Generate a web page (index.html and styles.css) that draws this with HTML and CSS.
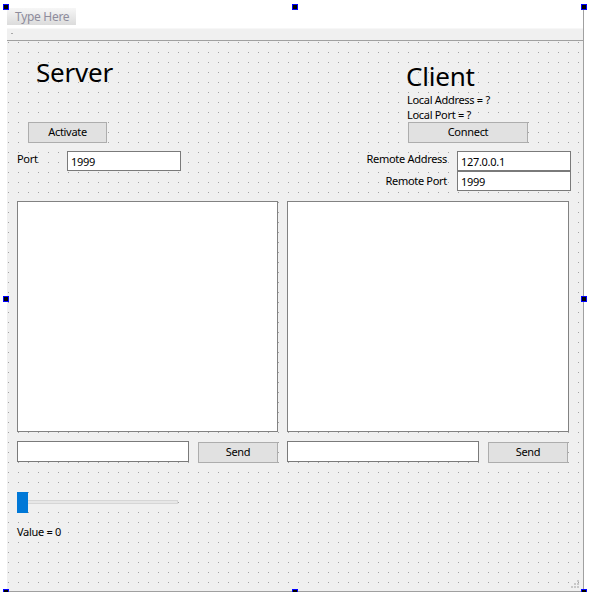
FILE: index.html
```html
<!DOCTYPE html>
<html>
<head>
<meta charset="utf-8">
<link rel="stylesheet" href="styles.css">
</head>
<body>
<div class="form">
  <div class="menubar"><div class="typehere">Type Here</div></div>
  <div class="toolbar"><span class="tb-mark"></span></div>
  <div class="central">
    <div class="top">
      <div class="server-col">
        <div class="title server-title">Server</div>
        <div class="btn activate">Activate</div>
        <div class="port-row">
          <div class="lbl port-lbl">Port</div>
          <div class="edit port-edit">1999</div>
        </div>
      </div>
      <div class="client-col">
        <div class="title client-title">Client</div>
        <div class="info">Local Address = ?</div>
        <div class="info">Local Port = ?</div>
        <div class="btn connect">Connect</div>
        <div class="remote-row first">
          <div class="lbl rlbl">Remote Address</div>
          <div class="edit redit">127.0.0.1</div>
        </div>
        <div class="remote-row">
          <div class="lbl rlbl rport">Remote Port</div>
          <div class="edit redit">1999</div>
        </div>
      </div>
    </div>
    <div class="editors">
      <div class="textedit left"></div>
      <div class="textedit right"></div>
    </div>
    <div class="send-row">
      <div class="edit line left-line"></div>
      <div class="btn send">Send</div>
      <div class="edit line right-line"></div>
      <div class="btn send">Send</div>
    </div>
    <div class="slider">
      <div class="groove"></div>
      <div class="knob"></div>
    </div>
    <div class="value">Value = 0</div>
    <svg class="grip" width="9" height="9" viewBox="0 0 9 9">
      <rect x="6" y="0" width="2" height="2" fill="#c8c8c8"/>
      <rect x="3" y="3" width="2" height="2" fill="#c8c8c8"/>
      <rect x="6" y="3" width="2" height="2" fill="#c8c8c8"/>
      <rect x="0" y="6" width="2" height="2" fill="#c8c8c8"/>
      <rect x="3" y="6" width="2" height="2" fill="#c8c8c8"/>
      <rect x="6" y="6" width="2" height="2" fill="#c8c8c8"/>
    </svg>
  </div>
  <span class="handle h-tl"></span>
  <span class="handle h-tm"></span>
  <span class="handle h-tr"></span>
  <span class="handle h-ml"></span>
  <span class="handle h-mr"></span>
  <span class="handle h-bl"></span>
  <span class="handle h-bm"></span>
  <span class="handle h-br"></span>
</div>
</body>
</html>
```
FILE: styles.css
```css
html, body {
  margin: 0;
  padding: 0;
  background: #ffffff;
}
body {
  font-family: "Noto Sans", "Open Sans", sans-serif;
  font-size: 11px;
  letter-spacing: -0.3px;
  color: #000;
}
.form {
  position: relative;
  margin: 7px 0 0 7px;
  width: 576px;
  height: 584px;
  border-right: 1px solid #a0a0a0;
  border-bottom: 1px solid #a0a0a0;
  display: flex;
  flex-direction: column;
}
.menubar {
  height: 21px;
  background: #ffffff;
  box-sizing: border-box;
  padding-top: 1px;
}
.typehere {
  width: 69px;
  height: 17px;
  background: linear-gradient(#f6f6f6, #dcdcdc);
  color: #8e8c9c;
  font-size: 12px;
  line-height: 17px;
  padding-left: 8px;
  box-sizing: border-box;
}
.toolbar {
  height: 12px;
  background: #f0f0f0;
  border-top: 1px solid #f7f7f7;
  box-sizing: border-box;
  position: relative;
}
.tb-mark {
  position: absolute;
  left: 4px;
  top: 4px;
  width: 2px;
  height: 1px;
  background: #a8a8a8;
}
.central {
  flex: 1;
  position: relative;
  border-top: 1px solid #a0a0a0;
  background-color: #a4a4a4;
  background-image:
    linear-gradient(to right, transparent 1px, #f0f0f0 1px),
    linear-gradient(to bottom, transparent 1px, #f0f0f0 1px);
  background-size: 10px 10px;
  background-position: 1px 1px;
  padding-left: 10px;
}
.top {
  display: flex;
}
.server-col {
  width: 270px;
  display: flex;
  flex-direction: column;
}
.client-col {
  display: flex;
  flex-direction: column;
}
.title {
  font-size: 26px;
  letter-spacing: -0.2px;
  line-height: 30px;
  height: 30px;
}
.server-title {
  margin: 16px 0 0 19px;
}
.client-title {
  margin: 20px 0 0 119px;
}
.btn {
  box-sizing: border-box;
  height: 21px;
  background: #e1e1e1;
  border: 1px solid #adadad;
  text-align: center;
  line-height: 18px;
}
.activate {
  margin: 35px 0 0 11px;
  width: 79px;
}
.port-row {
  display: flex;
  margin-top: 8px;
}
.lbl {
  line-height: 16px;
}
.port-lbl {
  width: 50px;
}
.edit {
  box-sizing: border-box;
  height: 20px;
  background: #ffffff;
  border: 1px solid #7a7a7a;
  line-height: 19px;
  padding-left: 3px;
}
.port-edit {
  width: 114px;
}
.info {
  margin-left: 120px;
  line-height: 15px;
  height: 15px;
}
.client-title + .info {
  margin-top: 1px;
}
.connect {
  margin-left: 121px;
  width: 120px;
}
.remote-row {
  display: flex;
  gap: 10px;
}
.remote-row.first {
  margin-top: 8px;
}
.rlbl {
  width: 160px;
  text-align: right;
}
.rport {
  padding-top: 2px;
}
.redit {
  width: 114px;
}
.editors {
  display: flex;
  gap: 9px;
  margin-top: 10px;
}
.textedit {
  box-sizing: border-box;
  height: 231px;
  background: #ffffff;
  border: 1px solid #828282;
}
.textedit.left { width: 261px; }
.textedit.right { width: 282px; }
.send-row {
  display: flex;
  align-items: flex-start;
  margin-top: 9px;
}
.line {
  height: 21px;
}
.left-line { width: 172px; margin-right: 9px; }
.right-line { width: 192px; margin-right: 9px; }
.send {
  width: 80px;
  margin-top: 1px;
  margin-right: 9px;
}
.slider {
  position: relative;
  width: 161px;
  height: 21px;
  margin-top: 29px;
}
.groove {
  position: absolute;
  left: 0;
  right: 0;
  top: 8px;
  height: 4px;
  box-sizing: border-box;
  background: #e7e7e7;
  border: 1px solid #d6d6d6;
}
.knob {
  position: absolute;
  left: 0;
  top: 0;
  width: 11px;
  height: 21px;
  background: #0078d7;
}
.value {
  margin-top: 11px;
  line-height: 16px;
}
.grip {
  position: absolute;
  right: 3px;
  bottom: 2px;
}
.handle {
  position: absolute;
  width: 6px;
  height: 6px;
  box-sizing: border-box;
  border: 1px solid #0000ff;
  background: #000000;
}
.h-tl { left: -4px; top: -3px; }
.h-tm { left: 285px; top: -3px; }
.h-tr { left: 574px; top: -3px; }
.h-ml { left: -4px; top: 289px; }
.h-mr { left: 574px; top: 289px; }
.h-bl { left: -4px; top: 582px; }
.h-bm { left: 285px; top: 582px; }
.h-br { left: 574px; top: 582px; }
```
